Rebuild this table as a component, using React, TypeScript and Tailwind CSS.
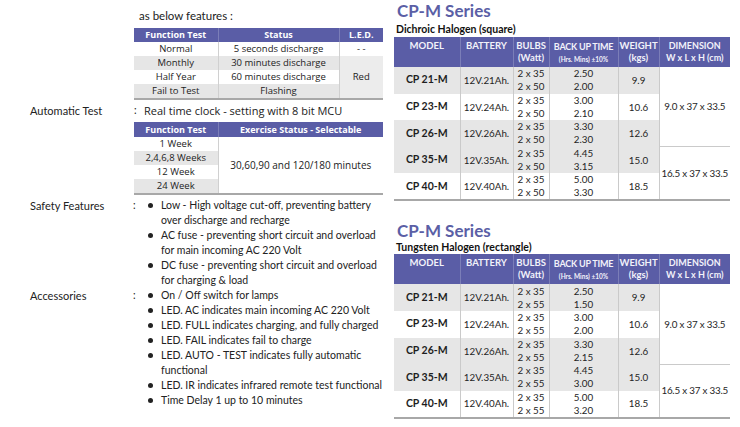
import React from 'react';

type Row = { model: string; bat: string; bulbs: string[]; time: string[]; kg: string };

const squareRows: Row[] = [
  { model: 'CP 21-M', bat: '12V.21Ah.', bulbs: ['2 x 35', '2 x 50'], time: ['2.50', '2.00'], kg: '9.9' },
  { model: 'CP 23-M', bat: '12V.24Ah.', bulbs: ['2 x 35', '2 x 50'], time: ['3.00', '2.10'], kg: '10.6' },
  { model: 'CP 26-M', bat: '12V.26Ah.', bulbs: ['2 x 35', '2 x 50'], time: ['3.30', '2.30'], kg: '12.6' },
  { model: 'CP 35-M', bat: '12V.35Ah.', bulbs: ['2 x 35', '2 x 50'], time: ['4.45', '3.15'], kg: '15.0' },
  { model: 'CP 40-M', bat: '12V.40Ah.', bulbs: ['2 x 35', '2 x 50'], time: ['5.00', '3.30'], kg: '18.5' },
];

const rectRows: Row[] = [
  { model: 'CP 21-M', bat: '12V.21Ah.', bulbs: ['2 x 35', '2 x 55'], time: ['2.50', '1.50'], kg: '9.9' },
  { model: 'CP 23-M', bat: '12V.24Ah.', bulbs: ['2 x 35', '2 x 55'], time: ['3.00', '2.00'], kg: '10.6' },
  { model: 'CP 26-M', bat: '12V.26Ah.', bulbs: ['2 x 35', '2 x 55'], time: ['3.30', '2.15'], kg: '12.6' },
  { model: 'CP 35-M', bat: '12V.35Ah.', bulbs: ['2 x 35', '2 x 55'], time: ['4.45', '3.00'], kg: '15.0' },
  { model: 'CP 40-M', bat: '12V.40Ah.', bulbs: ['2 x 35', '2 x 55'], time: ['5.00', '3.20'], kg: '18.5' },
];

const safety = [
  ['Low - High voltage cut-off, preventing battery', 'over discharge and recharge'],
  ['AC fuse - preventing short circuit and overload', 'for main incoming AC 220 Volt'],
  ['DC fuse - preventing short circuit and overload', 'for charging & load'],
];

const accessories = [
  ['On / Off switch for lamps'],
  ['LED. AC indicates main incoming AC 220 Volt'],
  ['LED. FULL indicates charging, and fully charged'],
  ['LED. FAIL indicates fail to charge'],
  ['LED. AUTO - TEST indicates fully automatic', 'functional'],
  ['LED. IR indicates infrared remote test functional'],
  ['Time Delay 1 up to 10 minutes'],
];

function Bullets({ label, items }: { label: string; items: string[][] }) {
  return (
    <div className="flex">
      <div className="w-[103px] shrink-0 text-[11px]">{label}</div>
      <div className="w-[3px] shrink-0">:</div>
      <ul className="pl-[12px]">
        {items.map((lines) => (
          <li key={lines[0]} className="flex">
            <span className="mt-[5px] mr-[8px] h-[5px] w-[5px] shrink-0 rounded-full bg-[#222]" />
            <span className="whitespace-nowrap">
              {lines.map((l) => (
                <span key={l} className="block">{l}</span>
              ))}
            </span>
          </li>
        ))}
      </ul>
    </div>
  );
}

function SeriesTable({ subtitle, rows, tall }: { subtitle: string; rows: Row[]; tall?: boolean }) {
  const gray = [0, 2, 3];
  return (
    <div>
      <h2 className={tall ? 'pl-[3px] text-[17px] font-bold leading-[22px] text-[#5b5fa6]' : 'pl-[3px] text-[17px] font-bold leading-[20px] text-[#5b5fa6]'}>
        CP-M Series
      </h2>
      <p className={tall ? 'pl-[2px] text-[10.5px] font-bold leading-[15px] text-[#111]' : 'pl-[2px] text-[10.5px] font-bold leading-[13px] text-[#111]'}>
        {subtitle}
      </p>
      <table className="w-[336px] table-fixed border-collapse whitespace-nowrap border-b-2 border-[#a8a8a8] text-[9.8px] text-[#1e1e1e]">
        <colgroup>
          <col className="w-[66px]" />
          <col className="w-[53px]" />
          <col className="w-[36px]" />
          <col className="w-[69px]" />
          <col className="w-[41px]" />
          <col className="w-[71px]" />
        </colgroup>
        <thead>
          <tr className="h-[30px] bg-[#5a5da6] align-top text-[9.5px] font-bold leading-[12px] text-[#f2f2fa]">
            <th className="border-r border-[#7b7eb8] pt-[3px]">MODEL</th>
            <th className="border-r border-[#7b7eb8] pt-[3px]">BATTERY</th>
            <th className="border-r border-[#7b7eb8] pt-[3px]">
              BULBS
              <br />
              (Watt)
            </th>
            <th className="border-r border-[#7b7eb8] pt-[4px] text-[9px] tracking-[-0.2px]">
              BACK UP TIME
              <br />
              <span className="text-[6.5px] leading-[12px] tracking-normal">(Hrs. Mins) ±10%</span>
            </th>
            <th className="border-r border-[#7b7eb8] pt-[3px]">
              WEIGHT
              <br />
              (kgs)
            </th>
            <th className="pt-[3px] text-[9px]">
              DIMENSION
              <br />
              W x L x H (cm)
            </th>
          </tr>
        </thead>
        <tbody>
          {rows.map((r, i) => (
            <tr
              key={r.model}
              className={gray.includes(i) ? 'h-[26.6px] bg-[#e6e6e6] text-center' : 'h-[26.6px] bg-white text-center'}
            >
              <td className="border-r border-[#cacaca] text-[10.5px] font-bold">{r.model}</td>
              <td className="border-r border-[#cacaca]">{r.bat}</td>
              <td className="border-r border-[#cacaca] leading-[13px]">
                {r.bulbs[0]}
                <br />
                {r.bulbs[1]}
              </td>
              <td className="border-r border-[#cacaca] leading-[13px]">
                {r.time[0]}
                <br />
                {r.time[1]}
              </td>
              <td className="border-r border-[#cacaca]">{r.kg}</td>
              {i === 0 && (
                <td rowSpan={3} className="border-b border-[#cacaca] bg-white text-[9.8px] tracking-[-0.2px]">
                  9.0 x 37 x 33.5
                </td>
              )}
              {i === 3 && (
                <td rowSpan={2} className="bg-white text-[9.8px] tracking-[-0.2px]">
                  16.5 x 37 x 33.5
                </td>
              )}
            </tr>
          ))}
        </tbody>
      </table>
    </div>
  );
}

export default function App() {
  return (
    <div
      className="flex h-[427px] w-[740px] overflow-hidden bg-white text-[#222]"
      style={{ fontFamily: 'Lato, "Liberation Sans", sans-serif' }}
    >
      {/* Left: features */}
      <div className="w-[390px] shrink-0 pl-[30px] text-[10.5px] leading-[15px]">
        <p className="ml-[109px] pt-[8px] text-[11.5px] leading-[16px]">as below features :</p>
        <table
          className="ml-[104px] mt-[4px] w-[249px] table-fixed border-collapse whitespace-nowrap border-b-2 border-[#a8a8a8] text-center text-[9.5px] leading-[14px]"
          style={{ fontFamily: '"Open Sans", sans-serif' }}
        >
          <colgroup>
            <col className="w-[84px]" />
            <col className="w-[121px]" />
            <col className="w-[44px]" />
          </colgroup>
          <thead>
            <tr className="h-[14px] bg-[#5a5da6] text-[9px] font-bold text-white">
              <th className="border-r border-[#7b7eb8]">Function Test</th>
              <th className="border-r border-[#7b7eb8]">Status</th>
              <th>L.E.D.</th>
            </tr>
          </thead>
          <tbody>
            <tr className="h-[14px] bg-white">
              <td className="border-r border-[#d0d0d0]">Normal</td>
              <td className="border-r border-[#d0d0d0]">5 seconds discharge</td>
              <td>- -</td>
            </tr>
            <tr className="h-[14px] bg-[#e6e6e6]">
              <td className="border-r border-[#d0d0d0]">Monthly</td>
              <td className="border-r border-[#d0d0d0]">30 minutes discharge</td>
              <td rowSpan={3} className="bg-[#ececec]">Red</td>
            </tr>
            <tr className="h-[14px] bg-white">
              <td className="border-r border-[#d0d0d0]">Half Year</td>
              <td className="border-r border-[#d0d0d0]">60 minutes discharge</td>
            </tr>
            <tr className="h-[14px] bg-[#e6e6e6]">
              <td className="border-r border-[#d0d0d0]">Fail to Test</td>
              <td className="border-r border-[#d0d0d0]">Flashing</td>
            </tr>
          </tbody>
        </table>

        <div className="flex h-[20px] items-center">
          <div className="w-[104px] shrink-0 text-[11px]">Automatic Test</div>
          <div className="w-[3px] shrink-0">:</div>
          <div className="whitespace-nowrap pl-[7px] text-[11px]" style={{ fontFamily: '"Open Sans", sans-serif' }}>
            Real time clock - setting with 8 bit MCU
          </div>
        </div>

        <table
          className="ml-[104px] mt-[2px] w-[249px] table-fixed border-collapse whitespace-nowrap border-b-2 border-[#a8a8a8] text-center text-[9.5px] leading-[14px]"
          style={{ fontFamily: '"Open Sans", sans-serif' }}
        >
          <colgroup>
            <col className="w-[84px]" />
            <col className="w-[165px]" />
          </colgroup>
          <thead>
            <tr className="h-[15px] bg-[#5a5da6] text-[9px] font-bold text-white">
              <th className="border-r border-[#7b7eb8]">Function Test</th>
              <th>Exercise Status - Selectable</th>
            </tr>
          </thead>
          <tbody>
            <tr className="h-[14px] bg-white">
              <td className="border-r border-[#d0d0d0]">1 Week</td>
              <td rowSpan={4} className="bg-white text-[10px]">30,60,90 and 120/180 minutes</td>
            </tr>
            <tr className="h-[14px] bg-[#e6e6e6]">
              <td className="border-r border-[#d0d0d0]">2,4,6,8 Weeks</td>
            </tr>
            <tr className="h-[14px] bg-white">
              <td className="border-r border-[#d0d0d0]">12 Week</td>
            </tr>
            <tr className="h-[14px] bg-[#e6e6e6]">
              <td className="border-r border-[#d0d0d0]">24 Week</td>
            </tr>
          </tbody>
        </table>

        <div className="mt-[3px]">
          <Bullets label="Safety Features" items={safety} />
          <Bullets label="Accessories" items={accessories} />
        </div>
      </div>

      {/* Right: CP-M series tables */}
      <div className="flex flex-col gap-[20px] pl-[4px]">
        <SeriesTable subtitle="Dichroic Halogen (square)" rows={squareRows} tall />
        <SeriesTable subtitle="Tungsten Halogen (rectangle)" rows={rectRows} />
      </div>
    </div>
  );
}
